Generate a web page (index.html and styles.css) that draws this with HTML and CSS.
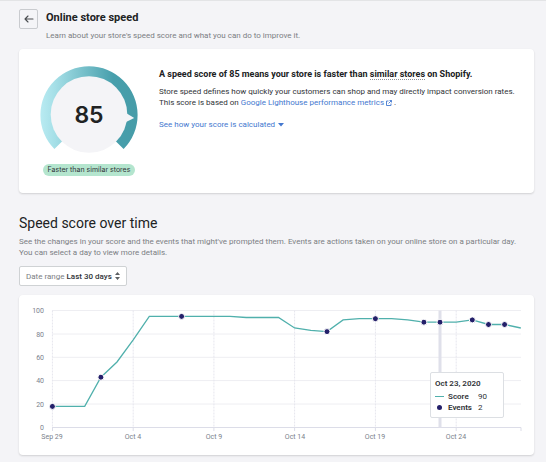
FILE: index.html
```html
<!DOCTYPE html>
<html lang="en">
<head>
<meta charset="utf-8">
<meta name="viewport" content="width=device-width, initial-scale=1">
<title>Online store speed</title>
<link rel="stylesheet" href="styles.css">
</head>
<body>
<main class="page">
  <header class="page-header">
    <button class="back" type="button" aria-label="Back">
      <svg viewBox="0 0 10 8" width="10" height="8" fill="none" stroke="#4a4d50" stroke-width="1.1" stroke-linecap="round" stroke-linejoin="round"><path d="M9 4H1M4 1 1 4l3 3"/></svg>
    </button>
    <div class="heading">
      <h1>Online store speed</h1>
      <p class="muted">Learn about your store's speed score and what you can do to improve it.</p>
    </div>
  </header>

  <section class="card summary">
    <div class="gauge">
      <svg viewBox="0 0 98 87" width="98" height="87" role="img" aria-labelledby="gauge-value">
        <defs>
          <linearGradient id="arc" x1="0" x2="1" y1="0.5" y2="0.5">
            <stop offset="0" stop-color="#b9ebf2"/>
            <stop offset="0.15" stop-color="#a5dfe7"/>
            <stop offset="0.75" stop-color="#479fac"/>
            <stop offset="1" stop-color="#479ca8"/>
          </linearGradient>
        </defs>
        <path fill="url(#arc)" d="M14.4 83.1A48.6 48.6 0 1 1 83.6 83.1L75.5 75A37 37 0 1 0 22.5 75Z"/>
        <circle cx="49" cy="48.5" r="38.3" fill="#f4f4f7"/>
        <path fill="#f4f4f7" d="M86 47 94.2 52 86 56Z"/>
        <text id="gauge-value" class="gauge-value" x="49" y="57">85</text>
      </svg>
      <span class="badge">Faster than similar stores</span>
    </div>
    <div class="details">
      <h2>A speed score of 85 means your store is faster than <span class="term">similar stores</span> on Shopify.</h2>
      <p>Store speed defines how quickly your customers can shop and may directly impact conversion rates. This score is based on <a href="#lighthouse">Google Lighthouse performance metrics <svg class="external" viewBox="0 0 12 12" width="6" height="6" fill="none" stroke="currentColor" stroke-width="1.8"><path d="M5 2H1v9h9V7M7 1h4v4M11 1 5 7"/></svg></a> .</p>
      <button class="disclosure" type="button">See how your score is calculated <svg viewBox="0 0 6 4" width="6" height="4" fill="currentColor"><path d="M0 0h6L3 3.6Z"/></svg></button>
    </div>
  </section>

  <section class="history">
    <h2 class="section-title">Speed score over time</h2>
    <p class="muted">See the changes in your score and the events that might've prompted them. Events are actions taken on your online store on a particular day. You can select a day to view more details.</p>
    <button class="range" type="button"><span class="range-label">Date range</span> Last 30 days
      <svg viewBox="0 0 5 8" width="5" height="8" fill="#5c5f62"><path d="M2.5 0 5 3H0ZM0 5h5L2.5 8Z"/></svg>
    </button>
  </section>

  <section class="card chart">
    <svg class="plot" viewBox="0 0 515 160" role="img" aria-label="Speed score by day">
      <g class="grid">
        <path d="M33 15.5H502M33 39H502M33 62.3H502M33 85.6H502M33 109H502"/>
        <path class="dashed" d="M33.4 15.5V132M114.2 15.5V132M194.9 15.5V132M275.6 15.5V132M356.4 15.5V132M437.2 15.5V132"/>
        <path class="axis" d="M33 132.5H502V136M33.5 132.5V136M114.2 132.5V136M194.9 132.5V136M275.6 132.5V136M356.4 132.5V136M437.2 132.5V136"/>
      </g>
      <rect x="419.5" y="15.5" width="3" height="117" fill="#dfe0ea"/>
      <g class="y-labels">
        <text x="25" y="18">100</text><text x="25" y="42">80</text><text x="25" y="65">60</text><text x="25" y="88">40</text><text x="25" y="112">20</text><text x="25" y="135">0</text>
      </g>
      <g class="x-labels">
        <text x="33" y="144">Sep 29</text><text x="114" y="144">Oct 4</text><text x="195" y="144">Oct 9</text><text x="276" y="144">Oct 14</text><text x="356" y="144">Oct 19</text><text x="437" y="144">Oct 24</text>
      </g>
      <path class="line" d="M33.4 111.4H65.7L81.9 82.2 98 67 114.2 44.8 130.3 21.4H211L227.2 22.5H259.5L275.6 33 291.8 35.4 308 36.6 324.1 24.9 340.3 23.7H372.6L388.7 24.9 404.9 27.2H437.2L453.3 24.9 469.5 29.5H485.6L501.8 33"/>
      <g class="events">
        <circle cx="33.4" cy="111.4" r="3"/><circle cx="81.9" cy="82.2" r="3"/><circle cx="162.6" cy="21.4" r="3"/><circle cx="308" cy="36.6" r="3"/><circle cx="356.4" cy="23.7" r="3"/><circle cx="404.9" cy="27.2" r="3"/><circle cx="421" cy="27.2" r="3"/><circle cx="453.3" cy="24.9" r="3"/><circle cx="469.5" cy="29.5" r="3"/><circle cx="485.6" cy="29.5" r="3"/>
      </g>
    </svg>
    <div class="tooltip">
      <strong>Oct 23, 2020</strong>
      <dl>
        <dt><i class="key-line"></i>Score</dt><dd>90</dd>
        <dt><i class="key-dot"></i>Events</dt><dd>2</dd>
      </dl>
    </div>
  </section>
</main>
</body>
</html>
```
FILE: styles.css
```css
* { box-sizing: border-box; }
body {
  margin: 0;
  border-top: 1px solid #e3e4e6;
  background: #f4f4f7;
  color: #303337;
  font: 8px/11px Roboto, "Liberation Sans", sans-serif;
}
h1, h2, p, dl, dd { margin: 0; }
button { font: inherit; color: inherit; cursor: pointer; }
a { color: #4478cf; text-decoration: none; }
.page { padding: 8px 12px 8px 19px; }
.muted { color: #7b7e83; }
.page-header { display: flex; align-items: flex-start; gap: 8px; }
.back {
  display: grid;
  place-items: center;
  width: 19px;
  height: 20px;
  padding: 0;
  border: 1px solid #c9cbcf;
  border-radius: 2px;
  background: transparent;
}
h1 { margin-bottom: 3px; font-size: 11px; line-height: 18px; font-weight: 700; color: #202223; }
.card {
  border-radius: 4px;
  background: #fff;
  box-shadow: 0 1px 2px rgba(23, 24, 24, 0.16);
}
.summary { display: flex; gap: 21px; margin-top: 8px; padding: 17px 14px; }
.gauge { display: flex; flex-direction: column; align-items: center; gap: 11px; width: 98px; margin-left: 7px; }
.gauge-value { font-family: Inter, sans-serif; font-size: 23px; font-weight: 600; text-anchor: middle; fill: #202223; }
.badge {
  padding: 0 5px;
  border-radius: 6px;
  background: #b4e5ce;
  font-family: Inter, sans-serif;
  font-size: 7px;
  line-height: 12px;
  white-space: nowrap;
}
.details { flex: 1; }
.details h2 { margin-bottom: 6px; font-size: 9px; line-height: 16px; font-weight: 700; color: #202223; }
.details p { margin-top: -2px; }
.term { border-bottom: 1px dotted #8c9196; }
.external { vertical-align: -1px; }
.disclosure { margin-top: 11px; padding: 0; border: 0; background: none; color: #4478cf; }
.disclosure svg { margin-left: 1px; }
.history { margin-top: 21px; }
.history .muted { padding-right: 12px; }
.section-title { margin-bottom: 3px; font-size: 14px; line-height: 19px; font-weight: 400; color: #202223; }
.range {
  height: 20px;
  margin: 8px 0 9px;
  padding: 0 6px;
  border: 1px solid #cfd2d4;
  border-radius: 2px;
  background: #fff;
  font-weight: 500;
}
.range-label { color: #7b7e83; font-weight: 400; }
.range svg { margin-left: 1px; vertical-align: -1px; }
.chart { position: relative; }
.plot { display: block; width: 100%; }
.grid path { fill: none; stroke: #eeeef2; }
.grid .dashed { stroke: #e6e6ee; stroke-dasharray: 2 1; }
.grid .axis { stroke: #dcdde8; }
.y-labels, .x-labels { font-size: 7px; fill: #7b818c; }
.x-labels { text-anchor: middle; }
.y-labels { text-anchor: end; }
.line { fill: none; stroke: #50b0ac; stroke-width: 1.3; }
.events { fill: #24206a; stroke: #fff; stroke-width: 1; }
.tooltip {
  position: absolute;
  right: 30px;
  bottom: 37px;
  width: 74px;
  padding: 5px 4px 4px;
  border: 1px solid #dcdfe3;
  border-radius: 2px;
  background: #fff;
}
.tooltip strong { font-weight: 600; }
.tooltip dl { display: grid; grid-template-columns: auto 1fr; column-gap: 6px; margin-top: 2px; }
.tooltip dt { display: flex; align-items: center; gap: 4px; font-weight: 600; }
.key-line { width: 9px; height: 1px; background: #50b0ac; }
.key-dot { width: 5px; height: 5px; margin: 0 2px; border-radius: 50%; background: #24206a; }
```
